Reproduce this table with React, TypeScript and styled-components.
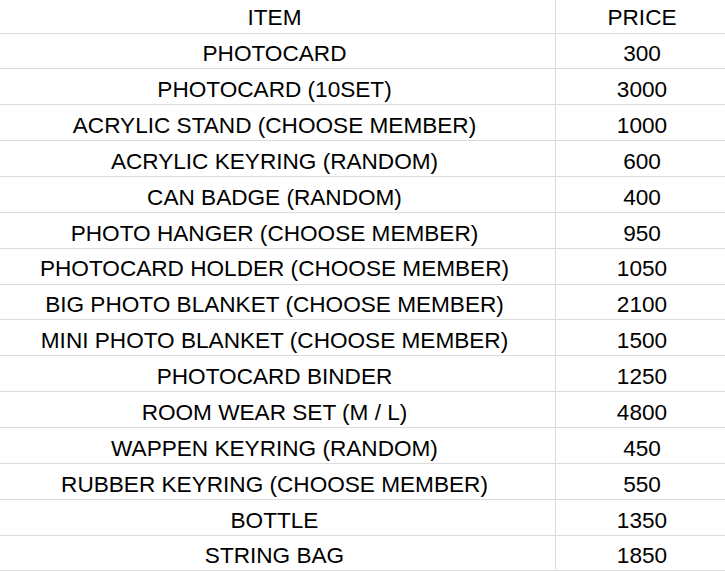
import { Fragment } from 'react';
import styled, { createGlobalStyle } from 'styled-components';

const GlobalStyle = createGlobalStyle`
    html, body {
        margin: 0;
        padding: 0;
        background: #fff;
        overflow: hidden;
    }
    body {
        font-family: 'Liberation Sans', Arial, sans-serif;
    }
`;

const Sheet = styled.div`
    display: grid;
    grid-template-columns: 561px 173px;
    grid-auto-rows: 35.86px;
    margin: -2.3px 0 0 -5.5px;
    width: 734px;
`;

const Cell = styled.div<{ $last?: boolean }>`
    box-sizing: border-box;
    display: flex;
    align-items: flex-end;
    justify-content: center;
    padding-bottom: 2.5px;
    border-bottom: 1px solid #dcdcdc;
    border-right: ${({ $last }) => ($last ? 'none' : '1px solid #dcdcdc')};
    font-size: 22.6px;
    line-height: 1;
    color: #000;
    white-space: nowrap;
`;

const items: [string, string][] = [
    ['ITEM', 'PRICE'],
    ['PHOTOCARD', '300'],
    ['PHOTOCARD (10SET)', '3000'],
    ['ACRYLIC STAND (CHOOSE MEMBER)', '1000'],
    ['ACRYLIC KEYRING (RANDOM)', '600'],
    ['CAN BADGE (RANDOM)', '400'],
    ['PHOTO HANGER (CHOOSE MEMBER)', '950'],
    ['PHOTOCARD HOLDER (CHOOSE MEMBER)', '1050'],
    ['BIG PHOTO BLANKET (CHOOSE MEMBER)', '2100'],
    ['MINI PHOTO BLANKET (CHOOSE MEMBER)', '1500'],
    ['PHOTOCARD BINDER', '1250'],
    ['ROOM WEAR SET (M / L)', '4800'],
    ['WAPPEN KEYRING (RANDOM)', '450'],
    ['RUBBER KEYRING (CHOOSE MEMBER)', '550'],
    ['BOTTLE', '1350'],
    ['STRING BAG', '1850'],
];

const App = () => {
    return (
        <>
            <GlobalStyle />
            <Sheet>
                {items.map(([name, price]) => (
                    <Fragment key={name}>
                        <Cell>{name}</Cell>
                        <Cell $last>{price}</Cell>
                    </Fragment>
                ))}
            </Sheet>
        </>
    );
};

export default App;
